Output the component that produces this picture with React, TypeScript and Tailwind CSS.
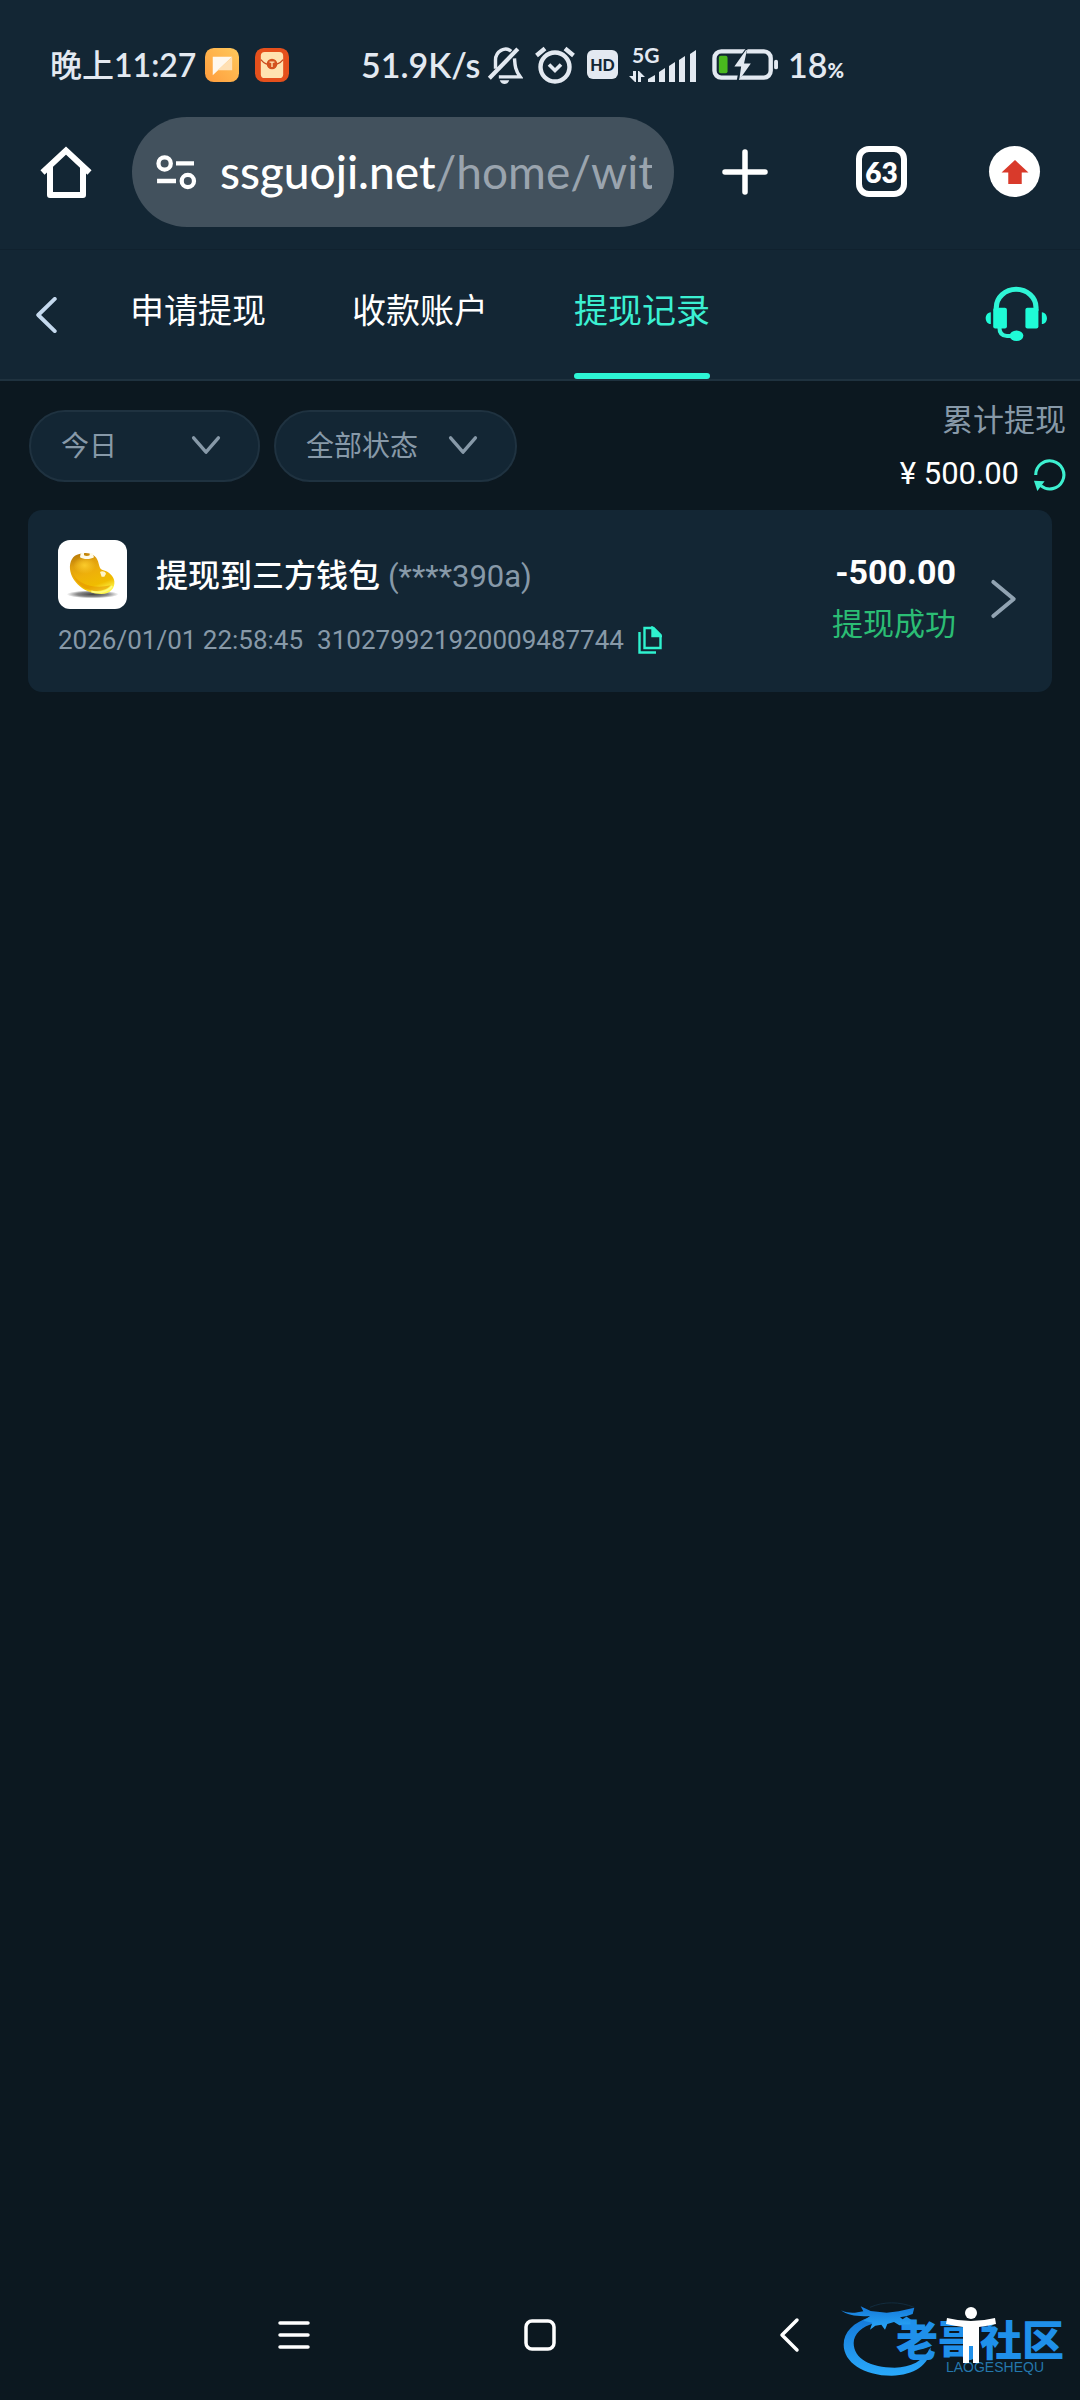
import type { ReactNode } from "react"

const CJK = "font-[Roboto,'Noto_Sans_CJK_SC',sans-serif]"

function StatusBar() {
  return (
    <div className="flex h-[117px] items-center pl-[50px] pt-3 text-[#e3e9f1]">
      <div className="flex w-[311px] items-center">
        <div className="flex w-[155px] items-center whitespace-nowrap font-[Lato,'Noto_Sans_CJK_SC',sans-serif] text-[32px] font-semibold leading-none">
          <span className="font-medium">晚上</span>
          <span>11:27</span>
        </div>
        <svg className="size-[34px]" viewBox="0 0 35 35" aria-hidden="true">
          <defs>
            <linearGradient id="note" x1="0" y1="1" x2="1" y2="0">
              <stop offset="0" stopColor="#ff9c3c" />
              <stop offset="1" stopColor="#ffc95c" />
            </linearGradient>
          </defs>
          <rect width="35" height="35" rx="9" fill="url(#note)" />
          <path d="M8 9h20L8 28z" fill="#fff8ee" />
          <path d="M28 9v14H13z" fill="#ffe0b4" />
        </svg>
        <svg className="ml-4 size-[34px]" viewBox="0 0 35 35" aria-hidden="true">
          <rect width="35" height="35" rx="9" fill="#e5501c" />
          <rect x="6" y="4" width="23" height="27" rx="4" fill="#ffe3b0" />
          <path d="M6 12c4 5 7 5 11 5s8 0 12-5" fill="none" stroke="#c8481c" strokeWidth="1.3" />
          <circle cx="17.500" cy="16.500" r="5.500" fill="#d4531f" />
          <path d="M15 14.500h5M17.500 14.500v5" stroke="#ffe3b0" strokeWidth="1.400" />
        </svg>
      </div>
      <span className="w-[126px] whitespace-nowrap font-[Lato,sans-serif] text-[34px] font-semibold leading-none">51.9K/s</span>
      <svg className="h-[38px] w-[36px]" viewBox="0 0 37 40" fill="none" stroke="currentColor" strokeWidth="3.600" aria-hidden="true">
        <path d="M25 5.500C22 2.800 18 2.500 14.500 4.500C10 7 8.500 11 8.500 15v9M28.500 13c.5 7 .5 12 6 19.500H12" />
        <path d="M2 34L32 3" strokeWidth="4.400" />
        <path d="M13 36h10c-1 3-3 4-5 4s-4-1-5-4z" fill="currentColor" stroke="none" />
      </svg>
      <svg className="ml-3 h-[38px] w-[40px]" viewBox="0 0 40 38" fill="none" stroke="currentColor" strokeWidth="4.400" aria-hidden="true">
        <circle cx="20" cy="21" r="14.500" />
        <path d="M14 18.500l6 6 6-6" strokeWidth="3.600" />
        <path d="M1.500 9.500l8.500-7M38.500 9.500L30 2.500" />
      </svg>
      <span className="ml-3 flex h-[29px] w-[31px] items-center justify-center rounded-md bg-[#e3e9f1] font-[Lato,sans-serif] text-[16px] font-black leading-none text-[#132634]">HD</span>
      <div className="relative ml-[11px] h-[37px] w-[68px]">
        <span className="absolute left-[3px] top-0 font-[Lato,sans-serif] text-[21px] font-bold leading-[17px]">5G</span>
        <svg className="h-[37px] w-[68px]" viewBox="0 0 68 37" fill="currentColor" aria-hidden="true">
          <path d="M4 25h3v11H6L0 30h4zM9 36V25h1l6 6h-4v5z" />
          <path d="M19 33l7-4v7h-7zM30 26l6-4v14h-6zM40 20l6-4v20h-6zM50 14l6-4v26h-6zM61 8l6-4v32h-6z" />
        </svg>
      </div>
      <svg className="ml-3.5 h-[32px] w-[69px]" viewBox="0 0 69 33" aria-hidden="true">
        <rect x="2.500" y="2.500" width="58" height="27" rx="7" fill="none" stroke="currentColor" strokeWidth="4.500" />
        <rect x="7" y="7" width="9" height="18" rx="2" fill="#49b81e" />
        <path d="M36-2L20 19h8l-3 16 16-20h-8l4-17z" fill="#132634" />
        <path d="M35 1L23 18h7l-2 14 12-17h-7l3-14z" fill="currentColor" />
        <rect x="64" y="11" width="4" height="10" rx="2" fill="currentColor" />
      </svg>
      <span className="ml-2 flex items-baseline font-[Lato,sans-serif] text-[34px] font-semibold leading-none">
        18<span className="text-[20px] font-black">%</span>
      </span>
    </div>
  )
}

function BrowserBar() {
  return (
    <div className="flex h-[133px] items-start justify-between border-b border-[#10212e] px-10 text-white">
      <button aria-label="主页" className="mt-[29px]">
        <svg className="size-[52px]" viewBox="0 0 52 52" fill="none" stroke="currentColor" strokeWidth="6" strokeLinejoin="round" aria-hidden="true">
          <path d="M2.500 26.500L26 4.500l23.500 22" strokeLinejoin="miter" />
          <path d="M10 21v28h33V21" />
        </svg>
      </button>
      <button className="ml-10 flex h-[110px] min-w-0 flex-1 items-center rounded-full bg-[#42515d] px-[22px]">
        <svg className="h-[36px] w-[44px] shrink-0" viewBox="0 0 44 38" fill="none" stroke="currentColor" strokeWidth="4.500" aria-hidden="true">
          <circle cx="10" cy="10" r="6.500" />
          <path d="M22 10h19M2 28.500h20" />
          <circle cx="34.500" cy="28.500" r="6.500" />
        </svg>
        <span className="ml-[22px] flex-1 overflow-hidden whitespace-nowrap text-left font-[Lato,sans-serif] text-[46px] font-medium leading-[60px]">
          ssguoji.net<span className="font-normal text-[#9aa4ae]">/home/wit</span>
        </span>
      </button>
      <button aria-label="新标签页" className="ml-12 mt-8">
        <svg className="size-[46px]" viewBox="0 0 46 46" stroke="currentColor" strokeWidth="5.500" strokeLinecap="round" aria-hidden="true">
          <path d="M23 3v40M3 23h40" />
        </svg>
      </button>
      <button aria-label="标签页" className="ml-[88px] mt-[29px] flex size-[51px] items-center justify-center rounded-[13px] border-[6px] border-white font-[Lato,sans-serif] text-[28px] font-extrabold leading-none">
        63
      </button>
      <button aria-label="更新" className="ml-[82px] mt-[29px] flex size-[51px] items-center justify-center rounded-full bg-white">
        <svg className="h-[25px] w-[28px]" viewBox="0 0 28 26" fill="#d93a2b" aria-hidden="true">
          <path d="M14 1L28 14h-7v12H7V14H0z" />
        </svg>
      </button>
    </div>
  )
}

const TABS = ["申请提现", "收款账户", "提现记录"]

function TabBar() {
  return (
    <header className="flex h-[131px] items-center border-b-2 border-[#1f323f] pl-[34px] pr-8">
      <button aria-label="返回" className="w-[96px]">
        <svg className="h-[36px] w-[25px]" viewBox="0 0 25 37" fill="none" stroke="#c5d9ee" strokeWidth="4" strokeLinecap="round" strokeLinejoin="round" aria-hidden="true">
          <path d="M21 2L4 18.500 21 35" />
        </svg>
      </button>
      <nav className="flex flex-1 gap-[86px] self-stretch">
        {TABS.map((tab, i) => (
          <button
            key={tab}
            className={
              i === 2
                ? "flex flex-col justify-between text-[34px] leading-[123px] text-[#3bf0d2]"
                : "flex flex-col justify-between text-[34px] leading-[123px] text-white"
            }
          >
            {tab}
            {i === 2 && <span className="h-1.5 w-full rounded-full bg-[#2df5d5]" />}
          </button>
        ))}
      </nav>
      <button aria-label="客服">
        <svg className="h-[57px] w-[63px]" viewBox="1290 140 184 172" preserveAspectRatio="none" fill="#1ffbd7" aria-hidden="true">
          <path d="M1323 215v-10a58 55 0 0 1 116 0v10" fill="none" stroke="#2ff5d6" strokeWidth="15" />
          <rect x="1314" y="206" width="40" height="62" rx="6" />
          <rect x="1408" y="206" width="38" height="62" rx="6" />
          <path d="M1307 219v36c-20-2-20-34 0-36zM1456 219v36c20-2 20-34 0-36z" />
          <path d="M1332 264c0 20 10 27 22 27h20" fill="none" stroke="#2ff5d6" strokeWidth="12" />
          <ellipse cx="1382" cy="290" rx="20" ry="16" />
        </svg>
      </button>
    </header>
  )
}

function Filter({ label, value, className }: { label: string; value: string; className: string }) {
  return (
    <label className={`relative block h-[72px] ${className}`}>
      <select
        aria-label={label}
        className="h-full w-full appearance-none rounded-full border-2 border-[#1f3240] bg-[#132634] pl-[30px] pt-0.5 text-[28px] text-[#8799a8]"
      >
        <option>{value}</option>
      </select>
      <svg className="pointer-events-none absolute right-[38px] top-[25px] h-[21px] w-[32px]" viewBox="0 0 32 22" fill="none" stroke="#8799a8" strokeWidth="3.500" strokeLinecap="round" strokeLinejoin="round" aria-hidden="true">
        <path d="M3 3l13 15L29 3" />
      </svg>
    </label>
  )
}

function Filters() {
  return (
    <div className="flex items-start gap-3.5 pl-[29px] pr-3.5">
      <Filter label="日期" value="今日" className="mt-[29px] w-[231px]" />
      <Filter label="状态" value="全部状态" className="mt-[29px] w-[243px]" />
      <div className="ml-auto mt-[13px] text-right text-[31px]">
        <div className="leading-[54px] text-[#8799a8]">累计提现</div>
        <div className="flex items-center justify-end gap-3.5 leading-[52px] text-white">
          <span>¥ 500.00</span>
          <button aria-label="刷新">
            <svg className="size-[33px]" viewBox="0 0 34 34" aria-hidden="true">
              <path d="M2.800 17.500A14.500 14.500 0 1 1 8 28.500" fill="none" stroke="#3df0d0" strokeWidth="3.200" />
              <path d="M1 23.500l11 .5-7.500 10z" fill="#3df0d0" />
            </svg>
          </button>
        </div>
      </div>
    </div>
  )
}

function BeanIcon() {
  return (
    <svg className="size-[69px] rounded-xl bg-white" viewBox="0 0 207 207" aria-hidden="true">
      <defs>
        <radialGradient id="shade">
          <stop offset="0" stopColor="#444" />
          <stop offset="0.600" stopColor="#8a8a8a" />
          <stop offset="1" stopColor="#fff" />
        </radialGradient>
        <linearGradient id="bean" x1="0.200" y1="0" x2="0.600" y2="1">
          <stop offset="0" stopColor="#b87a08" />
          <stop offset="0.250" stopColor="#e0a00e" />
          <stop offset="0.500" stopColor="#eeb00a" />
          <stop offset="0.800" stopColor="#f0bc00" />
          <stop offset="1" stopColor="#fff84a" />
        </linearGradient>
        <radialGradient id="glow">
          <stop offset="0" stopColor="#fbcb2a" />
          <stop offset="1" stopColor="#fbcb2a" stopOpacity="0" />
        </radialGradient>
      </defs>
      <ellipse cx="104" cy="163" rx="78" ry="12" fill="url(#shade)" />
      <path d="M64 42C44 46 34 64 36 88C40 126 80 162 130 162C158 162 171 144 169 124C167 108 152 94 134 90C124 88 124 76 120 64C114 44 92 34 64 42z" fill="url(#bean)" />
      <ellipse cx="80" cy="76" rx="34" ry="26" fill="url(#glow)" />
      <path d="M42 96C56 132 104 148 158 136C132 166 60 158 42 96z" fill="#e39200" opacity="0.550" />
      <path d="M68 40l-2 12c10 7 32 7 42 0l-4-12-9-2v8c-5 3-12 3-17 0v-8z" fill="#fffbe8" />
      <path d="M126 96c6-4 15-2 18 5l-5 9h-8z" fill="#fff6c8" />
      <path d="M100 154c24 6 50 2 62-16" fill="none" stroke="#fffa80" strokeWidth="5" />
    </svg>
  )
}

function RecordCard() {
  return (
    <article className="mx-7 mt-[10px] flex items-center rounded-[14px] bg-[#132634] pl-[30px] pr-[34px] pt-[30px] pb-[34px]">
      <div className="flex-1">
        <div className="flex items-end">
          <BeanIcon />
          <h2 className="ml-[29px] text-[32px] font-medium leading-[64px] text-white">
            提现到三方钱包 <span className="text-[31px] font-normal text-[#8799a8]">(****390a)</span>
          </h2>
        </div>
        <div className="mt-[13px] flex items-center text-[26px] leading-[36px] text-[#8799a8]">
          <time>2026/01/01 22:58:45</time>
          <span className="ml-3.5">310279921920009487744</span>
          <button aria-label="复制" className="ml-3.5">
            <svg className="h-[28px] w-[24px]" viewBox="0 0 24 28" fill="none" stroke="#2ff2cf" strokeWidth="2.400" aria-hidden="true">
              <path d="M6.500 2h9L22.500 9v13h-16z" />
              <path d="M14.500 2v8h8z" fill="#2ff2cf" />
              <path d="M1.500 6v20.500H18" />
            </svg>
          </button>
        </div>
      </div>
      <div className="text-right">
        <div className="text-[34px] font-bold leading-[52px] text-white">-500.00</div>
        <div className="text-[31px] leading-[54px] text-[#2bbd74]">提现成功</div>
      </div>
      <button aria-label="详情" className="ml-[34px]">
        <svg className="h-[40px] w-[28px]" viewBox="0 0 28 41" fill="none" stroke="#91a3b2" strokeWidth="4" strokeLinecap="round" strokeLinejoin="round" aria-hidden="true">
          <path d="M3 3l21 17.500L3 38" />
        </svg>
      </button>
    </article>
  )
}

function Watermark() {
  return (
    <div className="pointer-events-none absolute right-[16px] top-[30px] h-[78px] w-[224px]">
      <svg className="h-full w-full" viewBox="600 116 672 234" aria-hidden="true">
        <defs>
          <linearGradient id="dragon" x1="0" y1="0" x2="0" y2="1">
            <stop offset="0" stopColor="#1478d8" />
            <stop offset="1" stopColor="#2aa9fa" />
          </linearGradient>
        </defs>
        <g fill="url(#dragon)">
          <path d="M690 168C640 183 611 213 611 250C611 302 670 343 755 343C820 343 872 310 872 258C850 300 812 319 764 319C692 319 641 292 641 245C641 218 664 196 706 184z" />
          <path d="M603 147C628 158 646 155 670 150L662 135L692 149L740 154L776 150L823 139L818 158L798 165L818 178L814 191L778 192L762 182L742 188L735 205L724 190L706 193L690 205L697 184L670 178L690 164C655 166 622 163 603 147z" />
        </g>
        <path d="M780 168l22-4-14 10z" fill="#0c1820" />
        <path d="M690 138c40-18 90-18 132 0" fill="none" stroke="#122c3e" strokeWidth="3" />
      </svg>
      <span className="absolute right-0 top-[21px] font-['Noto_Sans_CJK_SC',sans-serif] text-[42px] font-black leading-[34px] text-[#1f90ea]">老哥社区</span>
      <span className="absolute right-[20px] top-[60px] font-['Liberation_Sans',sans-serif] text-[14px] leading-[14px] text-[#2477ac]">LAOGESHEQU</span>
    </div>
  )
}

function NavButton({ label, className, children }: { label: string; className: string; children: ReactNode }) {
  return (
    <button aria-label={label} className={className}>
      <svg className="size-[36px]" viewBox="0 0 36 36" fill="none" stroke="currentColor" strokeWidth="3.500" strokeLinecap="round" strokeLinejoin="round" aria-hidden="true">
        {children}
      </svg>
    </button>
  )
}

function SystemNav() {
  return (
    <footer className="relative mt-auto flex h-[130px] items-center pl-[276px] text-white">
      <Watermark />
      <NavButton label="最近任务" className="">
        <path d="M4 6h28M4 18h28M4 30h28" />
      </NavButton>
      <NavButton label="桌面" className="ml-[210px]">
        <rect x="4" y="4" width="28" height="28" rx="6" />
      </NavButton>
      <NavButton label="后退" className="ml-[215px]">
        <path d="M24 3L9 18l15 15" />
      </NavButton>
      <button aria-label="无障碍" className="relative ml-[137px]">
        <svg className="h-[56px] w-[50px]" viewBox="0 0 50 56" fill="currentColor" aria-hidden="true">
          <circle cx="25" cy="6" r="6" />
          <path d="M1 11q24 6 48 0l1 6q-9 2-17 3v36h-6V39h-4v17h-6V20q-8-1-17-3z" />
        </svg>
      </button>
    </footer>
  )
}

export default function App() {
  return (
    <div className={`flex min-h-screen flex-col bg-[#0c1820] ${CJK}`}>
      <div className="bg-[#132634]">
        <StatusBar />
        <BrowserBar />
        <TabBar />
      </div>
      <Filters />
      <RecordCard />
      <SystemNav />
    </div>
  )
}
